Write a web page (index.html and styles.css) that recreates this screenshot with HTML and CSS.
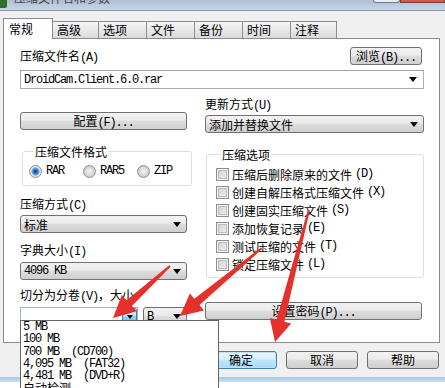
FILE: index.html
```html
<!DOCTYPE html>
<html lang="zh-CN">
<head>
    <meta charset="UTF-8">
    <title>压缩文件名和参数</title>
    <link rel="stylesheet" href="styles.css">
</head>
<body>
<div class="window">
    <!-- 标题栏（只露出下半部分） -->
    <div class="titlebar">
        <span class="app-icon"></span>
        <span class="title">压缩文件名和参数</span>
        <span class="caption-btn max"></span>
        <span class="caption-btn close"></span>
    </div>

    <div class="tabs">
        <div class="tab active">常规</div>
        <div class="tab first">高级</div>
        <div class="tab">选项</div>
        <div class="tab">文件</div>
        <div class="tab">备份</div>
        <div class="tab">时间</div>
        <div class="tab last">注释</div>
    </div>

    <div class="page">
        <div class="name-head">
            <span class="label">压缩文件名<span class="en">(A)</span></span>
            <button class="btn browse">浏览<span class="en">(B)...</span></button>
        </div>
        <div class="edit name-edit">
            <span class="en">DroidCam.Client.6.0.rar</span>
            <i class="caret"></i>
        </div>

        <div class="columns">
            <div class="col col-left">
                <button class="btn config">配置<span class="en">(F)...</span></button>

                <fieldset class="group format">
                    <legend>压缩文件格式</legend>
                    <div class="radios">
                        <label class="opt"><i class="radio on"></i><span class="en">RAR</span></label>
                        <label class="opt"><i class="radio"></i><span class="en">RAR5</span></label>
                        <label class="opt"><i class="radio"></i><span class="en">ZIP</span></label>
                    </div>
                </fieldset>

                <div class="label method-label">压缩方式<span class="en">(C)</span></div>
                <div class="combo"><span>标准</span><i class="caret"></i></div>

                <div class="label dict-label">字典大小<span class="en">(I)</span></div>
                <div class="combo dict"><span class="en">4096 KB</span><i class="caret"></i></div>

                <div class="label split-label">切分为分卷<span class="en">(V)</span>，大小</div>
                <div class="split-row">
                    <div class="edit split-edit">
                        <span class="drop-btn"><i class="caret"></i></span>
                    </div>
                    <div class="combo unit"><span class="en">B</span><i class="caret"></i></div>
                </div>
            </div>

            <div class="col col-right">
                <div class="label">更新方式<span class="en">(U)</span></div>
                <div class="combo update"><span>添加并替换文件</span><i class="caret"></i></div>

                <fieldset class="group options">
                    <legend>压缩选项</legend>
                    <label class="check-row"><i class="check"></i>压缩后删除原来的文件<span class="en">(D)</span></label>
                    <label class="check-row"><i class="check"></i>创建自解压格式压缩文件<span class="en">(X)</span></label>
                    <label class="check-row"><i class="check"></i>创建固实压缩文件<span class="en">(S)</span></label>
                    <label class="check-row"><i class="check"></i>添加恢复记录<span class="en">(E)</span></label>
                    <label class="check-row"><i class="check"></i>测试压缩的文件<span class="en">(T)</span></label>
                    <label class="check-row"><i class="check"></i>锁定压缩文件<span class="en">(L)</span></label>
                </fieldset>

                <button class="btn password">设置密码<span class="en">(P)...</span></button>
            </div>
        </div>
    </div>

    <div class="actions">
        <button class="btn default">确定</button>
        <button class="btn">取消</button>
        <button class="btn">帮助</button>
    </div>
    <div class="frame-bottom"></div>
    <div class="behind"></div>

    <!-- 分卷大小下拉列表 -->
    <ul class="dropdown">
        <li class="en">5 MB</li>
        <li class="en">100 MB</li>
        <li class="en">700 MB  (CD700)</li>
        <li class="en">4,095 MB  (FAT32)</li>
        <li class="en">4,481 MB  (DVD+R)</li>
        <li>自动检测</li>
    </ul>

    <!-- 红色标注箭头 -->
    <svg class="arrows" width="445" height="388" viewBox="0 0 445 388">
        <g fill="#e5302b">
            <polygon transform="translate(113 318) rotate(137.6)" points="-77,-1 -22,-4 -22,-11 0,0 -22,11 -22,4 -77,1"/>
            <polygon transform="translate(180 316) rotate(140.3)" points="-106,-1 -22,-4 -22,-11 0,0 -22,11 -22,4 -106,1"/>
            <polygon transform="translate(275 342) rotate(104.4)" points="-136,-1 -22,-4 -22,-11 0,0 -22,11 -22,4 -136,1"/>
        </g>
    </svg>
</div>
</body>
</html>
```

FILE: styles.css
```css
* {
    box-sizing: border-box;
}

body {
    margin: 0;
    width: 445px;
    height: 388px;
    overflow: hidden;
    background: #f0f0f0;
    font-family: "Noto Sans CJK SC", sans-serif;
    font-size: 12px;
    color: #000;
}

.window {
    position: relative;
    height: 388px;
}

/* 宋体里的半角字母，用等宽字体压窄来模拟 */
.en {
    font-family: "Liberation Mono", monospace;
    font-size: 12px;
    letter-spacing: -1.2px;
}

/* ---------- 标题栏 ---------- */
.titlebar {
    display: flex;
    height: 11px;
    background: linear-gradient(#aebfd4, #c9d6e5);
    border-bottom: 1px solid #8596ab;
    overflow: hidden;
}

.app-icon {
    width: 7px;
    height: 8px;
    background: #2f6e2c;
    border-radius: 0 0 2px 0;
}

.title {
    margin: -9px 0 0 7px;
    line-height: 14px;
    color: #444;
}

.caption-btn {
    height: 3px;
}

.max {
    margin-left: auto;
    width: 27px;
    background: #e8edf3;
    border: 1px solid #6d7b8d;
    border-top: 0;
    border-radius: 0 0 3px 3px;
}

.close {
    width: 45px;
    background: #d7564d;
    border: 1px solid #7a3c3a;
    border-top: 0;
}

/* ---------- 选项卡 ---------- */
.tabs {
    position: relative;
    z-index: 1;
    display: flex;
    align-items: flex-end;
    height: 20px;
    margin: 7px 0 0 3px;
}

.tab {
    width: 49px;
    height: 17px;
    margin-left: -1px;
    padding-left: 4px;
    border: 1px solid #898c95;
    border-bottom: 0;
    background: linear-gradient(#f4f4f4, #e8e8e8 50%, #dadada);
    line-height: 16px;
}

.tab.active {
    width: 50px;
    height: 21px;
    margin: 0 0 -1px 0;
    padding: 2px 0 0 5px;
    background: #fff;
}

.tab.first,
.tab.last {
    width: 47px;
}

/* ---------- 选项卡页 ---------- */
.page {
    width: 437px;
    height: 305px;
    margin-left: 3px;
    padding: 8px 15px 0 16px;
    background: #fff;
    border: 1px solid #898c95;
}

.label {
    line-height: 13px;
}

.name-head {
    display: flex;
    justify-content: space-between;
    align-items: flex-end;
    height: 18px;
}

.btn {
    height: 18px;
    padding: 0;
    font: inherit;
    color: #000;
    line-height: 16px;
    border: 1px solid #707070;
    border-radius: 3px;
    background: linear-gradient(#f2f2f2, #ebebeb 45%, #dddddd 50%, #cfcfcf);
}

.browse {
    width: 72px;
    margin-right: 2px;
}

.edit {
    display: flex;
    align-items: center;
    background: #fff;
    border: 1px solid #abadb3;
    border-top-color: #9ea2aa;
}

.name-edit {
    height: 19px;
    margin-top: 5px;
    padding: 0 6px 0 3px;
}

.caret {
    margin-left: auto;
    border-top: 5px solid #000;
    border-left: 4px solid transparent;
    border-right: 4px solid transparent;
}

.combo {
    display: flex;
    align-items: center;
    height: 18px;
    padding: 0 5px 0 3px;
    border: 1px solid #707070;
    border-radius: 3px;
    background: linear-gradient(#f2f2f2, #ebebeb 45%, #dddddd 50%, #cfcfcf);
}

.columns {
    display: grid;
    grid-template-columns: 167px 219px;
    column-gap: 18px;
    margin-top: 8px;
}

.col {
    display: flex;
    flex-direction: column;
}

.config {
    margin-top: 15px;
}

.update {
    margin-top: 2px;
}

/* ---------- 分组框 ---------- */
.group {
    margin: 15px 0 0;
    border: 1px solid #d5dfe5;
    border-radius: 3px;
}

.group legend {
    margin-left: 5px;
    padding: 0 1px;
    line-height: 13px;
}

.format {
    width: 165px;
    margin-left: 2px;
    padding: 6px 0 7px 6px;
}

.radios {
    display: flex;
    height: 14px;
}

.opt {
    display: flex;
    align-items: center;
    gap: 4px;
    width: 54px;
}

.radio {
    width: 13px;
    height: 13px;
    border: 1px solid #8e8f8f;
    border-radius: 50%;
    background: radial-gradient(circle, #f4f4f4 0, #e6e6e6 2px, #cfcfcf 5px);
}

.radio.on {
    background: radial-gradient(circle, #12397a 0, #2c6fc0 2px, #6eaee8 3.5px, #cfe4f7 4.5px, #e4e4e4 5.5px);
}

.options {
    width: 218px;
    margin-left: 1px;
    padding: 4px 0 4px 9px;
}

.check-row {
    display: flex;
    align-items: center;
    gap: 3px;
    height: 18px;
}

.check {
    width: 13px;
    height: 13px;
    border: 1px solid #8e8f8f;
    background: linear-gradient(135deg, #c9ccd1, #f4f4f4);
    box-shadow: inset 0 0 0 1px #f2f2f2, inset 0 0 0 2px #b9bdc2;
}

.method-label {
    margin-top: 11px;
}

.method-label + .combo {
    margin-top: 2px;
}

.dict-label {
    margin-top: 10px;
}

.dict {
    margin-top: 3px;
}

.split-label {
    margin-top: 8px;
}

.split-row {
    display: flex;
    gap: 5px;
    height: 19px;
    margin-top: 3px;
}

.split-edit {
    width: 118px;
    border-color: #a3b5c9;
}

.drop-btn {
    display: flex;
    align-items: center;
    justify-content: center;
    width: 15px;
    height: 100%;
    margin-left: auto;
    border: 1px solid #3c7fb1;
    border-radius: 0 2px 2px 0;
    background: linear-gradient(#e5f4fc, #c4e5f6 50%, #98d1ef 50%, #68b3db);
}

.drop-btn .caret {
    margin: 0;
    border-top-width: 4px;
    border-left-width: 3px;
    border-right-width: 3px;
}

.unit {
    width: 44px;
    height: 19px;
}

.password {
    width: 217px;
    margin-top: 24px;
}

/* ---------- 底部按钮 ---------- */
.actions {
    display: flex;
    justify-content: flex-end;
    gap: 9px;
    margin-top: 8px;
    padding-right: 6px;
}

.actions .btn {
    width: 72px;
}

.btn.default {
    border-color: #3c7fb1;
    background: linear-gradient(#eaf6fd, #d9f0fc 45%, #bee6fd 50%, #a7d9f5);
    box-shadow: inset 0 0 0 1px #bfe1f5;
}

.frame-bottom {
    height: 5px;
    margin-top: 8px;
    background: linear-gradient(#a9c4e2, #cddff2);
}

.behind {
    height: 20px;
    background: #fff;
}

/* ---------- 下拉列表 ---------- */
.dropdown {
    position: absolute;
    left: 20px;
    top: 320px;
    z-index: 4;
    width: 199px;
    height: 84px;
    margin: 0;
    padding: 0 2px;
    list-style: none;
    background: #fff;
    border: 1px solid #646464;
}

.dropdown li {
    height: 12.3px;
    line-height: 12px;
    white-space: pre;
}

.arrows {
    position: absolute;
    left: 0;
    top: 0;
    z-index: 5;
    pointer-events: none;
}
```
